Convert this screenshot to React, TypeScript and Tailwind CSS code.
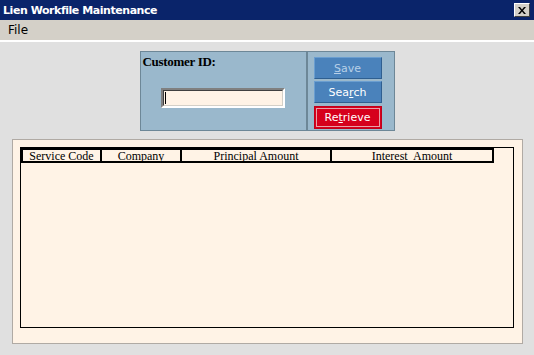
const COLS = [
  { label: "Service Code", w: "w-[79px]" },
  { label: "Company", w: "w-[80px]" },
  { label: "Principal Amount", w: "w-[150px]" },
  { label: "Interest\u00a0 Amount", w: "flex-1" },
];

const App = () => {
  return (
    <div className="w-[534px] h-[355px] bg-[#e0e0e0] flex flex-col overflow-hidden font-['Liberation_Sans',sans-serif]">
      {/* title bar */}
      <div className="h-[20px] bg-[#0a246a] flex items-center justify-between pl-[3px] pr-[4px]">
        <span className="text-white text-[11px] font-bold tracking-[-0.45px] font-['DejaVu_Sans',sans-serif] leading-none">
          Lien Workfile Maintenance
        </span>
        <div className="w-[16px] h-[14px] bg-[#d4d0c8] border border-t-white border-l-white border-r-[#404040] border-b-[#404040] flex items-center justify-center">
          <svg width="8" height="7" viewBox="0 0 8 7">
            <path d="M0 0h2l2 2.5L6 0h2L5 3.5 8 7H6L4 4.5 2 7H0l3-3.5z" fill="#000" />
          </svg>
        </div>
      </div>

      {/* menu bar */}
      <div className="h-[20px] bg-[#d4d0c8] flex items-center px-[8px]">
        <span className="text-[12px] text-black font-['DejaVu_Sans',sans-serif] leading-none">File</span>
      </div>
      <div className="h-[2px] bg-white" />

      {/* customer panel */}
      <div className="flex justify-center pt-[9px]">
        <div className="w-[255px] h-[80px] bg-[#9ab8cc] border border-[#6d8797] flex">
          <div className="w-[165px] flex flex-col pl-[2px] pt-[3px]">
            <span className="text-[13px] font-bold text-black font-['Liberation_Serif',serif] leading-none tracking-[-0.3px]">
              Customer ID:
            </span>
            <div className="mt-[20px] ml-[18px] w-[124px] h-[20px] bg-[#fff3e6] border-2 border-t-[#808080] border-l-[#808080] border-r-white border-b-white">
              <div className="w-full h-full border border-t-[#404040] border-l-[#404040] border-r-[#d4d0c8] border-b-[#d4d0c8] flex items-center pl-[1px]">
                <div className="w-[1px] h-[12px] bg-black" />
              </div>
            </div>
          </div>
          <div className="w-[2px] bg-[#6d8797]" />
          <div className="flex-1 flex flex-col items-start pl-[6px] pt-[5px] gap-[2px] font-['DejaVu_Sans',sans-serif] text-[11px]">
            <div className="w-[68px] h-[22px] bg-[#4a82bb] border border-t-[#6a9ed0] border-l-[#6a9ed0] border-r-[#2f5f90] border-b-[#2f5f90] flex items-center justify-center text-[#b8d0e8] leading-none">
              <span><span className="underline">S</span>ave</span>
            </div>
            <div className="w-[68px] h-[22px] bg-[#4a82bb] border border-t-[#6a9ed0] border-l-[#6a9ed0] border-r-[#2f5f90] border-b-[#2f5f90] flex items-center justify-center text-white leading-none">
              <span>Sea<span className="underline">r</span>ch</span>
            </div>
            <div className="mt-[1px] w-[68px] h-[23px] bg-[#d6001c] border border-[#c0001a] p-[1px]">
              <div className="w-full h-full border border-[#e8a0a8] flex items-center justify-center text-white leading-none">
                <span>Re<span className="underline">t</span>rieve</span>
              </div>
            </div>
          </div>
        </div>
      </div>

      {/* grid panel */}
      <div className="mt-[8px] mx-[12px] w-[511px] h-[205px] bg-[#fff3e6] border border-[#b0aaa4] pt-[7px] pl-[7px]">
        <div className="w-[494px] h-[181px] border border-black">
          <div className="flex w-[473px] h-[15px] border-2 border-black font-['Liberation_Serif',serif] text-[12px] text-black leading-none">
            {COLS.map((c, i) => (
              <div
                key={c.label}
                className={`${c.w} flex items-center justify-center ${i < COLS.length - 1 ? "border-r-2 border-black" : ""}`}
              >
                {c.label}
              </div>
            ))}
          </div>
        </div>
      </div>
    </div>
  );
};

export default App;
